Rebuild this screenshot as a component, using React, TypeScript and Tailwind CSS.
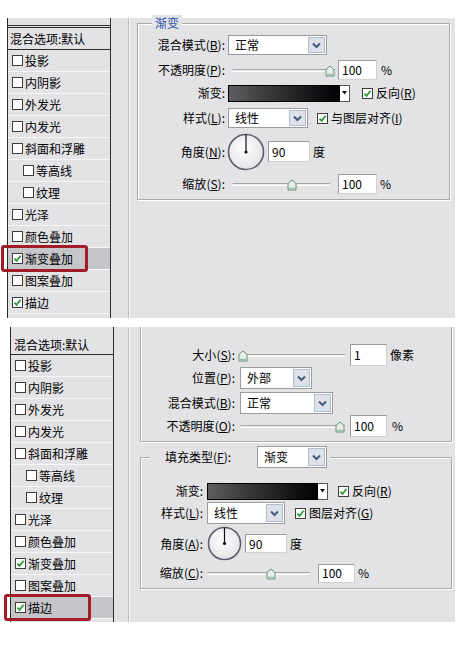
import React from 'react';

interface Layer {
  name: string;
  sub?: boolean;
}

const layers: Layer[] = [
  { name: '投影' },
  { name: '内阴影' },
  { name: '外发光' },
  { name: '内发光' },
  { name: '斜面和浮雕' },
  { name: '等高线', sub: true },
  { name: '纹理', sub: true },
  { name: '光泽' },
  { name: '颜色叠加' },
  { name: '渐变叠加' },
  { name: '图案叠加' },
  { name: '描边' },
];

function Check({ on }: { on?: boolean }) {
  return (
    <span className="w-[11px] h-[11px] border border-[#3c3c3c] bg-white flex items-center justify-center shrink-0">
      {on && (
        <svg width="9" height="9" viewBox="0 0 9 9">
          <polyline points="1.5,4.6 3.6,6.8 7.6,1.8" fill="none" stroke="#2e9a36" strokeWidth="1.8" />
        </svg>
      )}
    </span>
  );
}

function Lbl({ text, k }: { text: string; k?: string }) {
  if (!k) return <>{text}:</>;
  return (
    <>
      {text}(<u>{k}</u>):
    </>
  );
}

function Dropdown({ w, h, text }: { w: number; h: number; text: string }) {
  return (
    <div
      className="flex items-stretch bg-white border border-[#9c9ca0] shrink-0"
      style={{ width: w, height: h }}
    >
      <span className="flex-1 flex items-center pl-[6px]">{text}</span>
      <span className="w-[17px] m-[1px] flex items-center justify-center bg-[#dde1ea] border border-[#b3bccd]">
        <svg width="9" height="7" viewBox="0 0 9 7">
          <polyline points="1,1.5 4.5,5 8,1.5" fill="none" stroke="#4a5a7c" strokeWidth="2" />
        </svg>
      </span>
    </div>
  );
}

function Field({ w, h, value }: { w: number; h: number; value: string }) {
  return (
    <div
      className="flex items-center pl-[3px] bg-white border border-[#d0d0d4] border-t-[#9a9a9e] border-l-[#9a9a9e] shrink-0"
      style={{ width: w, height: h }}
    >
      {value}
    </div>
  );
}

function Slider({ w, pos }: { w: number; pos: number }) {
  return (
    <div className="relative h-[20px] flex items-center shrink-0" style={{ width: w }}>
      <div className="w-full h-[3px] border-t border-[#a4a4a8] border-b border-b-white bg-[#ececee] rounded-l-full" />
      <svg
        className="absolute top-[5px]"
        style={{ left: Math.round(pos * (w - 10)) }}
        width="10"
        height="12"
        viewBox="0 0 10 12"
      >
        <path d="M1 4.5 L5 1 L9 4.5 L9 11 L1 11 Z" fill="#e6efe8" stroke="#6b8f7c" strokeWidth="1" />
        <path d="M2 9.5 L8 9.5" stroke="#9fc0ab" strokeWidth="1.5" />
      </svg>
    </div>
  );
}

function Swatch({ w }: { w: number }) {
  return (
    <div className="flex h-[17px] shrink-0">
      <div
        className="h-full border border-black bg-gradient-to-r from-[#5e5e60] to-[#040406]"
        style={{ width: w }}
      />
      <div className="w-[10px] h-full bg-white border border-[#555] border-l-0 flex items-center justify-center">
        <svg width="5" height="4" viewBox="0 0 5 4">
          <path d="M0 0 L5 0 L2.5 3.5 Z" fill="#111" />
        </svg>
      </div>
    </div>
  );
}

function Dial({ size }: { size: number }) {
  const c = size / 2;
  return (
    <svg width={size} height={size} viewBox={`0 0 ${size} ${size}`} className="shrink-0">
      <defs>
        <radialGradient id={`dg${size}`} cx="45%" cy="40%" r="65%">
          <stop offset="0%" stopColor="#ffffff" />
          <stop offset="100%" stopColor="#e2e2e6" />
        </radialGradient>
      </defs>
      <circle cx={c} cy={c} r={c - 1.5} fill={`url(#dg${size})`} stroke="#5d5d6c" strokeWidth="1.6" />
      <line x1={c} y1={c} x2={c} y2={1.5} stroke="#111" strokeWidth="1.2" />
      <circle cx={c} cy={c} r="1.6" fill="#111" />
    </svg>
  );
}

function LayerList({ selected, topBar }: { selected: string; topBar?: boolean }) {
  return (
    <div className="w-[104px] h-full border-x border-[#2c2c2c] flex flex-col shrink-0">
      {topBar ? (
        <>
          <div className="h-[7px] shrink-0" />
          <div className="h-[25px] border-t-[3px] border-double border-[#2c2c2c] border-b border-b-[#2c2c2c] flex items-center pl-[2px] shrink-0">
            混合选项:默认
          </div>
        </>
      ) : (
        <div className="h-[28px] border-b border-[#2c2c2c] flex items-end pb-[1px] pl-[3px] shrink-0">
          混合选项:默认
        </div>
      )}
      {layers.map((l) => {
        const isSel = l.name === selected;
        const checked = l.name === '渐变叠加' || l.name === '描边';
        return (
          <div
            key={l.name}
            className={`relative h-[22px] flex items-center gap-[2px] border-b border-[#f6f6f8] shrink-0 ${
              l.sub ? 'pl-[15px]' : 'pl-[4px]'
            } ${isSel ? 'bg-[#c5c5ca]' : ''}`}
          >
            <Check on={checked} />
            <span>{l.name}</span>
            {isSel && (
              <div className="absolute -left-[7px] -top-[3px] w-[87px] h-[27px] border-[3px] border-[#a01d28] rounded-[3px]" />
            )}
          </div>
        );
      })}
    </div>
  );
}

function Row({ label, lw, h, mt, children }: { label: React.ReactNode; lw: number; h: number; mt?: number; children: React.ReactNode }) {
  return (
    <div className="flex items-center shrink-0" style={{ height: h, marginTop: mt ?? 0 }}>
      <div className="text-right shrink-0" style={{ width: lw }}>
        {label}
      </div>
      <div className="flex items-center">{children}</div>
    </div>
  );
}

function Separator() {
  return <div className="w-[2px] h-full border-l border-[#bdbdc2] bg-[#f7f7f9] shrink-0" />;
}

export default function App() {
  return (
    <div className="w-[459px] h-[646px] bg-white overflow-hidden font-['Noto_Sans_CJK_SC','Noto_Sans',sans-serif] text-[12px] leading-[16px] text-black">
      {/* top dialog: gradient overlay */}
      <div className="ml-[7px] mt-[18px] w-[448px] h-[300px] bg-[#e3e3e6] flex">
        <LayerList selected="渐变叠加" topBar />
        <div className="w-[17px] shrink-0" />
        <Separator />
        <div className="relative mt-[5px] ml-[7px] w-[313px] h-[177px] border border-[#a9a9ae] shadow-[inset_1px_1px_0_#fff,1px_1px_0_#fff] flex flex-col pt-[11px]">
          <span className="absolute -top-[9px] left-[14px] px-[3px] bg-[#e3e3e6] text-[#2c52ad]">渐变</span>
          <Row lw={87} h={20} label={<Lbl text="混合模式" k="B" />}>
            <div className="ml-[3px]">
              <Dropdown w={99} h={20} text="正常" />
            </div>
          </Row>
          <Row lw={87} h={20} mt={5} label={<Lbl text="不透明度" k="P" />}>
            <div className="ml-[7px]">
              <Slider w={103} pos={1} />
            </div>
            <div className="ml-[3px]">
              <Field w={39} h={20} value="100" />
            </div>
            <span className="ml-[4px]">%</span>
          </Row>
          <Row lw={87} h={20} mt={3} label={<Lbl text="渐变" />}>
            <div className="ml-[3px]">
              <Swatch w={112} />
            </div>
            <div className="ml-[12px]">
              <Check on />
            </div>
            <span className="ml-[3px]">
              反向(<u>R</u>)
            </span>
          </Row>
          <Row lw={87} h={20} mt={5} label={<Lbl text="样式" k="L" />}>
            <div className="ml-[3px]">
              <Dropdown w={80} h={20} text="线性" />
            </div>
            <div className="ml-[9px]">
              <Check on />
            </div>
            <span className="ml-[3px]">
              与图层对齐(<u>I</u>)
            </span>
          </Row>
          <Row lw={87} h={37} mt={5} label={<Lbl text="角度" k="N" />}>
            <div className="ml-[2px]">
              <Dial size={38} />
            </div>
            <div className="ml-[3px]">
              <Field w={42} h={21} value="90" />
            </div>
            <span className="ml-[3px]">度</span>
          </Row>
          <Row lw={87} h={20} mt={4} label={<Lbl text="缩放" k="S" />}>
            <div className="ml-[7px]">
              <Slider w={98} pos={0.62} />
            </div>
            <div className="ml-[8px]">
              <Field w={39} h={20} value="100" />
            </div>
            <span className="ml-[3px]">%</span>
          </Row>
        </div>
      </div>

      {/* bottom dialog: stroke */}
      <div className="ml-[10px] mt-[9px] w-[445px] h-[295px] bg-[#e3e3e6] flex">
        <LayerList selected="描边" />
        <div className="w-[14px] shrink-0" />
        <Separator />
        <div className="ml-[10px] w-[312px] flex flex-col">
          <div className="h-[115px] border-x border-b border-[#a9a9ae] shadow-[inset_1px_0_0_#fff,1px_1px_0_#fff] flex flex-col pt-[18px]">
            <Row lw={94} h={20} label={<Lbl text="大小" k="S" />}>
              <div className="ml-[3px]">
                <Slider w={107} pos={0} />
              </div>
              <div className="ml-[5px]">
                <Field w={37} h={22} value="1" />
              </div>
              <span className="ml-[3px]">像素</span>
            </Row>
            <Row lw={94} h={22} mt={2} label={<Lbl text="位置" k="P" />}>
              <div className="ml-[5px]">
                <Dropdown w={72} h={22} text="外部" />
              </div>
            </Row>
            <Row lw={94} h={22} mt={3} label={<Lbl text="混合模式" k="B" />}>
              <div className="ml-[5px]">
                <Dropdown w={93} h={22} text="正常" />
              </div>
            </Row>
            <Row lw={94} h={22} mt={1} label={<Lbl text="不透明度" k="O" />}>
              <div className="ml-[5px]">
                <Slider w={105} pos={1} />
              </div>
              <div className="ml-[5px]">
                <Field w={37} h={22} value="100" />
              </div>
              <span className="ml-[5px]">%</span>
            </Row>
          </div>
          <div className="relative mt-[15px] h-[132px] border border-[#a9a9ae] shadow-[inset_1px_1px_0_#fff,1px_1px_0_#fff] flex flex-col pt-[24px]">
            <div className="absolute -top-[13px] left-[9px] h-[24px] flex items-center bg-[#e3e3e6] pr-[3px]">
              <span className="w-[107px] pl-[15px]">
                <Lbl text="填充类型" k="F" />
              </span>
              <Dropdown w={70} h={22} text="渐变" />
            </div>
            <Row lw={62} h={18} label={<Lbl text="渐变" />}>
              <div className="ml-[4px]">
                <Swatch w={111} />
              </div>
              <div className="ml-[10px]">
                <Check on />
              </div>
              <span className="ml-[3px]">
                反向(<u>R</u>)
              </span>
            </Row>
            <Row lw={62} h={22} mt={2} label={<Lbl text="样式" k="L" />}>
              <div className="ml-[4px]">
                <Dropdown w={78} h={22} text="线性" />
              </div>
              <div className="ml-[10px]">
                <Check on />
              </div>
              <span className="ml-[3px]">
                图层对齐(<u>G</u>)
              </span>
            </Row>
            <Row lw={62} h={35} mt={2} label={<Lbl text="角度" k="A" />}>
              <div className="ml-[4px]">
                <Dial size={35} />
              </div>
              <div className="ml-[3px]">
                <Field w={42} h={19} value="90" />
              </div>
              <span className="ml-[3px]">度</span>
            </Row>
            <Row lw={62} h={20} mt={2} label={<Lbl text="缩放" k="C" />}>
              <div className="ml-[4px]">
                <Slider w={103} pos={0.63} />
              </div>
              <div className="ml-[8px]">
                <Field w={37} h={19} value="100" />
              </div>
              <span className="ml-[3px]">%</span>
            </Row>
          </div>
        </div>
      </div>
    </div>
  );
}
